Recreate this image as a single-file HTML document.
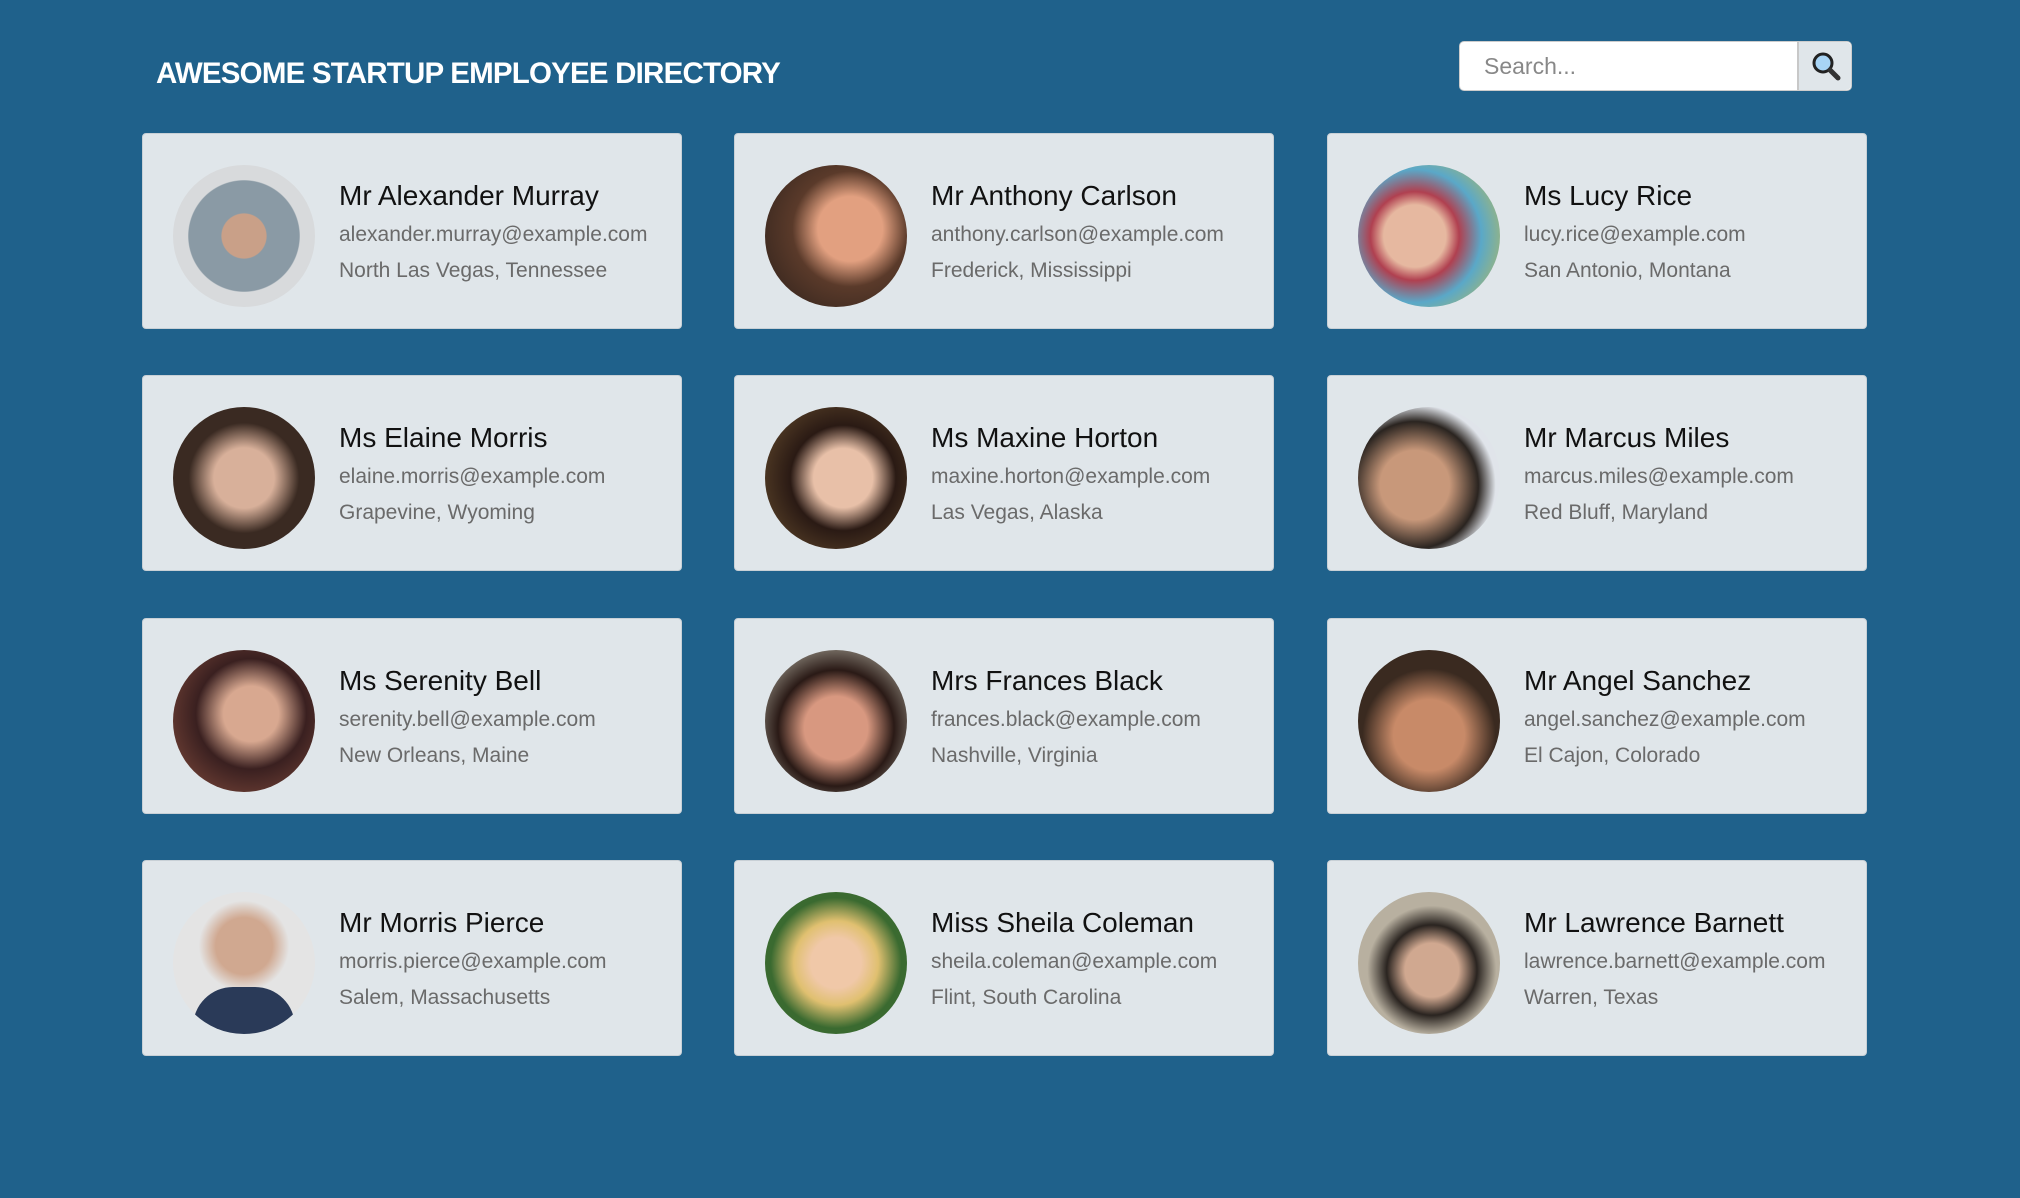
<!DOCTYPE html>
<html><head><meta charset="utf-8"><style>
*{box-sizing:border-box;margin:0;padding:0}
body{width:2020px;height:1198px;background:#1f618b;font-family:"Liberation Sans","DejaVu Sans",sans-serif;position:relative;overflow:hidden}
h1{position:absolute;left:156px;top:57px;color:#fff;font-size:29.5px;font-weight:bold;letter-spacing:-0.8px}
.search{position:absolute;left:1459px;top:41px;width:393px;height:50px;background:#fff;border-radius:5px;border:1px solid #ccc}
.search span{position:absolute;left:24px;top:11px;font-size:23px;color:#888}
.search .btn{position:absolute;right:0;top:0;width:54px;height:48px;background:#e0e6ea;border-left:2px solid #c8c8c8;border-radius:0 5px 5px 0}
.card{position:absolute;width:540px;height:196px;background:#e0e6ea;border-radius:4px;border:1px solid #c8d0d6}
.av{position:absolute;left:30px;top:31px;width:142px;height:142px;border-radius:50%;overflow:hidden}
.n{position:absolute;left:196px;top:46px;font-size:28px;color:#111;white-space:nowrap}
.e{position:absolute;left:196px;top:89px;font-size:21px;color:#6a6a6a;white-space:nowrap}
.l{position:absolute;left:196px;top:125px;font-size:21px;color:#6a6a6a;white-space:nowrap}
</style></head><body>
<h1>AWESOME STARTUP EMPLOYEE DIRECTORY</h1>
<div class="search"><span>Search...</span><div class="btn"><svg width="54" height="48" viewBox="0 0 54 48"><circle cx="24" cy="21" r="9" fill="#a8d4f5" stroke="#222" stroke-width="3"/><line x1="31" y1="28" x2="39" y2="36" stroke="#333" stroke-width="5" stroke-linecap="round"/></svg></div></div>

<div class="card" style="left:142px;top:133px"><div class="av" style="background:radial-gradient(circle at 50% 50%,#c9a088 0 22%,#8a9aa5 23% 55%,#d8dadc 56%)"></div><div class="n">Mr Alexander Murray</div><div class="e">alexander.murray@example.com</div><div class="l">North Las Vegas, Tennessee</div></div>
<div class="card" style="left:734px;top:133px"><div class="av" style="background:radial-gradient(circle at 60% 45%,#e2a080 0 28%,#5a3a2a 50%,#2a1f1a)"></div><div class="n">Mr Anthony Carlson</div><div class="e">anthony.carlson@example.com</div><div class="l">Frederick, Mississippi</div></div>
<div class="card" style="left:1327px;top:133px"><div class="av" style="background:radial-gradient(circle at 40% 50%,#e6b8a0 0 28%,#b04050 40%,#5aa8c8 60%,#d0c040)"></div><div class="n">Ms Lucy Rice</div><div class="e">lucy.rice@example.com</div><div class="l">San Antonio, Montana</div></div>

<div class="card" style="left:142px;top:375px"><div class="av" style="background:radial-gradient(circle at 50% 50%,#d8b09a 0 30%,#3a2a22 55%)"></div><div class="n">Ms Elaine Morris</div><div class="e">elaine.morris@example.com</div><div class="l">Grapevine, Wyoming</div></div>
<div class="card" style="left:734px;top:375px"><div class="av" style="background:radial-gradient(circle at 55% 50%,#e8c0a8 0 28%,#2a1a14 50%,#6a5030)"></div><div class="n">Ms Maxine Horton</div><div class="e">maxine.horton@example.com</div><div class="l">Las Vegas, Alaska</div></div>
<div class="card" style="left:1327px;top:375px"><div class="av" style="background:radial-gradient(circle at 40% 55%,#c8987a 0 30%,#2a2420 55%,#e0e4ea 70%)"></div><div class="n">Mr Marcus Miles</div><div class="e">marcus.miles@example.com</div><div class="l">Red Bluff, Maryland</div></div>

<div class="card" style="left:142px;top:618px"><div class="av" style="background:radial-gradient(circle at 55% 45%,#d8a890 0 25%,#3a2020 50%,#8a5040)"></div><div class="n">Ms Serenity Bell</div><div class="e">serenity.bell@example.com</div><div class="l">New Orleans, Maine</div></div>
<div class="card" style="left:734px;top:618px"><div class="av" style="background:radial-gradient(circle at 50% 55%,#d89880 0 30%,#2a1a16 55%,#d0d0c0)"></div><div class="n">Mrs Frances Black</div><div class="e">frances.black@example.com</div><div class="l">Nashville, Virginia</div></div>
<div class="card" style="left:1327px;top:618px"><div class="av" style="background:radial-gradient(circle at 50% 60%,#c88a68 0 32%,#3a2a20 60%)"></div><div class="n">Mr Angel Sanchez</div><div class="e">angel.sanchez@example.com</div><div class="l">El Cajon, Colorado</div></div>

<div class="card" style="left:142px;top:860px"><div class="av" style="background:radial-gradient(circle at 50% 38%,#d0a890 0 25%,#e4e4e4 40%);"><div style="position:absolute;left:20px;top:95px;width:102px;height:60px;border-radius:40px 40px 0 0;background:#2a3a58"></div></div><div class="n">Mr Morris Pierce</div><div class="e">morris.pierce@example.com</div><div class="l">Salem, Massachusetts</div></div>
<div class="card" style="left:734px;top:860px"><div class="av" style="background:radial-gradient(circle at 50% 50%,#f0c8a8 0 25%,#e0c070 42%,#3a6a30 65%)"></div><div class="n">Miss Sheila Coleman</div><div class="e">sheila.coleman@example.com</div><div class="l">Flint, South Carolina</div></div>
<div class="card" style="left:1327px;top:860px"><div class="av" style="background:radial-gradient(circle at 52% 55%,#d0a890 0 25%,#2a2420 42%,#b8b0a0 60%)"></div><div class="n">Mr Lawrence Barnett</div><div class="e">lawrence.barnett@example.com</div><div class="l">Warren, Texas</div></div>
</body></html>
